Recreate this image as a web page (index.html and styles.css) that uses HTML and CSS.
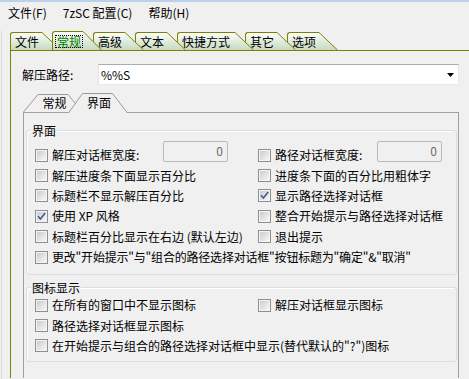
FILE: index.html
```html
<!DOCTYPE html>
<html lang="zh-CN">
<head>
<meta charset="utf-8">
<title>7zSC 配置</title>
<link rel="stylesheet" href="styles.css">
</head>
<body>
<div class="topstrip"></div>
<div class="menubar">
  <span class="menu-item">文件(F)</span>
  <span class="menu-item">7zSC 配置(C)</span>
  <span class="menu-item">帮助(H)</span>
</div>
<div class="main">
  <div class="tabs-outer">
    <div class="tabstrip">
      <div class="tab"><span class="tab-body">文件</span><svg class="tab-slant" width="19" height="18" viewBox="0 0 19 18"><defs><linearGradient id="tg" x1="0" y1="0" x2="0" y2="1"><stop offset="0" stop-color="#fbfdfa"/><stop offset="1" stop-color="#c5dbbf"/></linearGradient></defs><polygon points="0,0 19,18 0,18" fill="url(#tg)"/><line x1="0" y1="0.5" x2="18.5" y2="18" stroke="#808000"/></svg></div>
      <div class="tab active"><span class="tab-body"><span class="focus">常规</span></span><svg class="tab-slant" width="19" height="19" viewBox="0 0 19 19"><polygon points="0,0 19,19 0,19" fill="url(#tg)"/><line x1="0" y1="0.5" x2="18.5" y2="19" stroke="#808000"/></svg></div>
      <div class="tab"><span class="tab-body">高级</span><svg class="tab-slant" width="19" height="18" viewBox="0 0 19 18"><polygon points="0,0 19,18 0,18" fill="url(#tg)"/><line x1="0" y1="0.5" x2="18.5" y2="18" stroke="#808000"/></svg></div>
      <div class="tab"><span class="tab-body">文本</span><svg class="tab-slant" width="19" height="18" viewBox="0 0 19 18"><polygon points="0,0 19,18 0,18" fill="url(#tg)"/><line x1="0" y1="0.5" x2="18.5" y2="18" stroke="#808000"/></svg></div>
      <div class="tab"><span class="tab-body wide">快捷方式</span><svg class="tab-slant" width="19" height="18" viewBox="0 0 19 18"><polygon points="0,0 19,18 0,18" fill="url(#tg)"/><line x1="0" y1="0.5" x2="18.5" y2="18" stroke="#808000"/></svg></div>
      <div class="tab"><span class="tab-body">其它</span><svg class="tab-slant" width="19" height="18" viewBox="0 0 19 18"><polygon points="0,0 19,18 0,18" fill="url(#tg)"/><line x1="0" y1="0.5" x2="18.5" y2="18" stroke="#808000"/></svg></div>
      <div class="tab"><span class="tab-body">选项</span><svg class="tab-slant" width="19" height="18" viewBox="0 0 19 18"><polygon points="0,0 19,18 0,18" fill="url(#tg)"/><line x1="0" y1="0.5" x2="18.5" y2="18" stroke="#808000"/></svg></div>
    </div>
    <div class="page">
      <div class="path-row">
        <span class="path-label">解压路径:</span>
        <div class="combo">
          <span class="combo-text">%%S</span>
          <svg class="combo-arrow" width="7" height="4" viewBox="0 0 7 4"><polygon points="0,0 7,0 3.5,4" fill="#000"/></svg>
        </div>
      </div>
      <div class="inner">
        <div class="itabs">
          <div class="itab"><svg class="itab-shape" width="60" height="18" viewBox="0 0 60 18"><path d="M0.5 18 L15 0.5 L45 0.5 L59.5 18" fill="#f0f0f0" stroke="#9a9a9a"/></svg><span class="itab-label">常规</span></div>
          <div class="itab active"><svg class="itab-shape" width="60" height="20" viewBox="0 0 60 20"><path d="M0.5 20 L14.5 0.5 L44.5 0.5 L59.5 20" fill="#f0f0f0" stroke="#9a9a9a"/></svg><span class="itab-label">界面</span></div>
        </div>
        <div class="panel">
          <div class="group group1">
            <span class="group-title">界面</span>
            <div class="rows rows1">
              <div class="cbrow"><span class="cb"></span><span>解压对话框宽度:</span><span class="edit edit-l">0</span></div>
              <div class="cbrow"><span class="cb"></span><span>路径对话框宽度:</span><span class="edit edit-r">0</span></div>
              <div class="cbrow"><span class="cb"></span><span>解压进度条下面显示百分比</span></div>
              <div class="cbrow"><span class="cb"></span><span>进度条下面的百分比用粗体字</span></div>
              <div class="cbrow"><span class="cb"></span><span>标题栏不显示解压百分比</span></div>
              <div class="cbrow"><span class="cb"><svg class="tick" width="9" height="9" viewBox="0 0 9 9"><path d="M1 4.2 L3.4 7 L8.2 1" fill="none" stroke="#4a5a8e" stroke-width="1.6"/></svg></span><span>显示路径选择对话框</span></div>
              <div class="cbrow"><span class="cb"><svg class="tick" width="9" height="9" viewBox="0 0 9 9"><path d="M1 4.2 L3.4 7 L8.2 1" fill="none" stroke="#4a5a8e" stroke-width="1.6"/></svg></span><span>使用 XP 风格</span></div>
              <div class="cbrow"><span class="cb"></span><span>整合开始提示与路径选择对话框</span></div>
              <div class="cbrow"><span class="cb"></span><span>标题栏百分比显示在右边 (默认左边)</span></div>
              <div class="cbrow"><span class="cb"></span><span>退出提示</span></div>
              <div class="cbrow span2"><span class="cb"></span><span class="tight">更改"开始提示"与"组合的路径选择对话框"按钮标题为"确定"&amp;"取消"</span></div>
            </div>
          </div>
          <div class="group group2">
            <span class="group-title">图标显示</span>
            <div class="rows">
              <div class="cbrow"><span class="cb"></span><span>在所有的窗口中不显示图标</span></div>
              <div class="cbrow"><span class="cb"></span><span>解压对话框显示图标</span></div>
              <div class="cbrow span2"><span class="cb"></span><span>路径选择对话框显示图标</span></div>
              <div class="cbrow span2"><span class="cb"></span><span>在开始提示与组合的路径选择对话框中显示(替代默认的"?")图标</span></div>
            </div>
          </div>
        </div>
      </div>
    </div>
  </div>
</div>
</body>
</html>
```

FILE: styles.css
```css
html, body {
  margin: 0;
  padding: 0;
}
body {
  width: 469px;
  height: 379px;
  overflow: hidden;
  background: #f0f0f0;
  color: #000;
  font-family: "Noto Sans CJK SC", "Noto Sans", sans-serif;
  font-size: 12px;
  line-height: 1;
}
.topstrip {
  height: 2px;
  background: #b9d1ea;
}
.menubar {
  display: flex;
  height: 20px;
  padding-top: 1px;
  line-height: 20px;
}
.menu-item {
  padding: 0 8px;
  white-space: nowrap;
}
.main {
  margin-left: 1px;
  border-left: 1px solid #dadada;
  height: 356px;
}
.tabs-outer {
  margin: 8px 0 0 8px;
}
.tabstrip {
  display: flex;
  align-items: flex-end;
  height: 19px;
}
.tab {
  display: flex;
  height: 18px;
  margin-right: -9px;
}
.tab-body {
  display: flex;
  align-items: center;
  height: 100%;
  box-sizing: border-box;
  padding: 0 3px 0 4px;
  border-left: 1px solid #808000;
  border-top: 1px solid #808000;
  border-top-left-radius: 3px;
  background: linear-gradient(#fbfdfa, #c5dbbf);
  white-space: nowrap;
}
.tab-body.wide {
  padding-right: 5px;
}
.tab-slant {
  display: block;
  position: relative;
  z-index: 1;
  flex: none;
}
.tab.active {
  height: 19px;
  position: relative;
  z-index: 2;
}
.tab.active .tab-body {
  padding: 0 1px 0 3px;
  color: #008000;
}
.focus {
  display: inline-block;
  line-height: 11px;
  padding: 0 1px;
  outline: 1px dotted #000;
}
.page {
  border-top: 1px solid #808000;
  border-left: 1px solid #808000;
  height: 327px;
}
.path-row {
  display: flex;
  align-items: center;
  margin: 13px 0 0 11px;
}
.path-label {
  width: 76px;
  flex: none;
}
.combo {
  display: flex;
  align-items: center;
  width: 361px;
  height: 21px;
  box-sizing: border-box;
  padding: 0 4px 0 2px;
  border: 1px solid;
  border-color: #abadb3 #e3e9ef #e3e9ef #e2e3ea;
  background: #fff;
}
.combo-text {
  flex: 1;
}
.combo-arrow {
  display: block;
}
.inner {
  margin: 8px 0 0 12px;
  width: 436px;
}
.itabs {
  display: flex;
  align-items: flex-end;
  height: 19px;
}
.itab {
  position: relative;
  display: flex;
  align-items: center;
  justify-content: center;
  width: 60px;
  height: 18px;
  box-sizing: border-box;
  padding-left: 3px;
}
.itab + .itab {
  margin-left: -15px;
}
.itab.active {
  height: 20px;
  margin-bottom: -1px;
  padding-left: 2px;
}
.itab-shape {
  position: absolute;
  left: 0;
  top: 0;
  display: block;
}
.itab-label {
  position: relative;
}
.panel {
  border: 1px solid #a0a0a0;
  border-bottom: none;
  height: 266px;
  box-sizing: border-box;
  padding: 0 1px 0 2px;
}
.group {
  border: 1px solid #d5dfe5;
  border-radius: 3px;
  box-shadow: inset 1px 1px 0 #fff;
  padding: 0 0 5px 8px;
}
.group1 {
  margin-top: 17px;
  padding-bottom: 6.6px;
}
.group2 {
  margin-top: 12px;
}
.group-title {
  display: block;
  width: max-content;
  height: 14px;
  line-height: 14px;
  margin: -7px 0 0 -4px;
  padding: 0 1px;
  background: #f0f0f0;
}
.rows {
  display: grid;
  grid-template-columns: 223px 1fr;
  grid-auto-rows: 20.4px;
}
.rows1 {
  margin-top: 7px;
}
.cbrow {
  display: flex;
  align-items: center;
  gap: 4px;
  white-space: nowrap;
}
.span2 {
  grid-column: 1 / -1;
}
.tight {
  letter-spacing: -0.2px;
}
.cb {
  display: block;
  flex: none;
  width: 13px;
  height: 13px;
  box-sizing: border-box;
  border: 1px solid #8e8f8f;
  padding: 1px;
  background: linear-gradient(135deg, #c9cdd2, #f6f6f6) content-box, #f4f4f4;
}
.tick {
  display: block;
}
.edit {
  align-self: flex-start;
  margin-top: -4px;
  margin-left: auto;
  width: 65px;
  height: 21px;
  box-sizing: border-box;
  border: 1px solid #b9b9b9;
  border-radius: 2px;
  padding: 2px 4px 0 0;
  text-align: right;
  line-height: 14px;
  color: #6d6d6d;
}
.edit-l {
  margin-right: 30px;
}
.edit-r {
  margin-right: 14px;
}
```
